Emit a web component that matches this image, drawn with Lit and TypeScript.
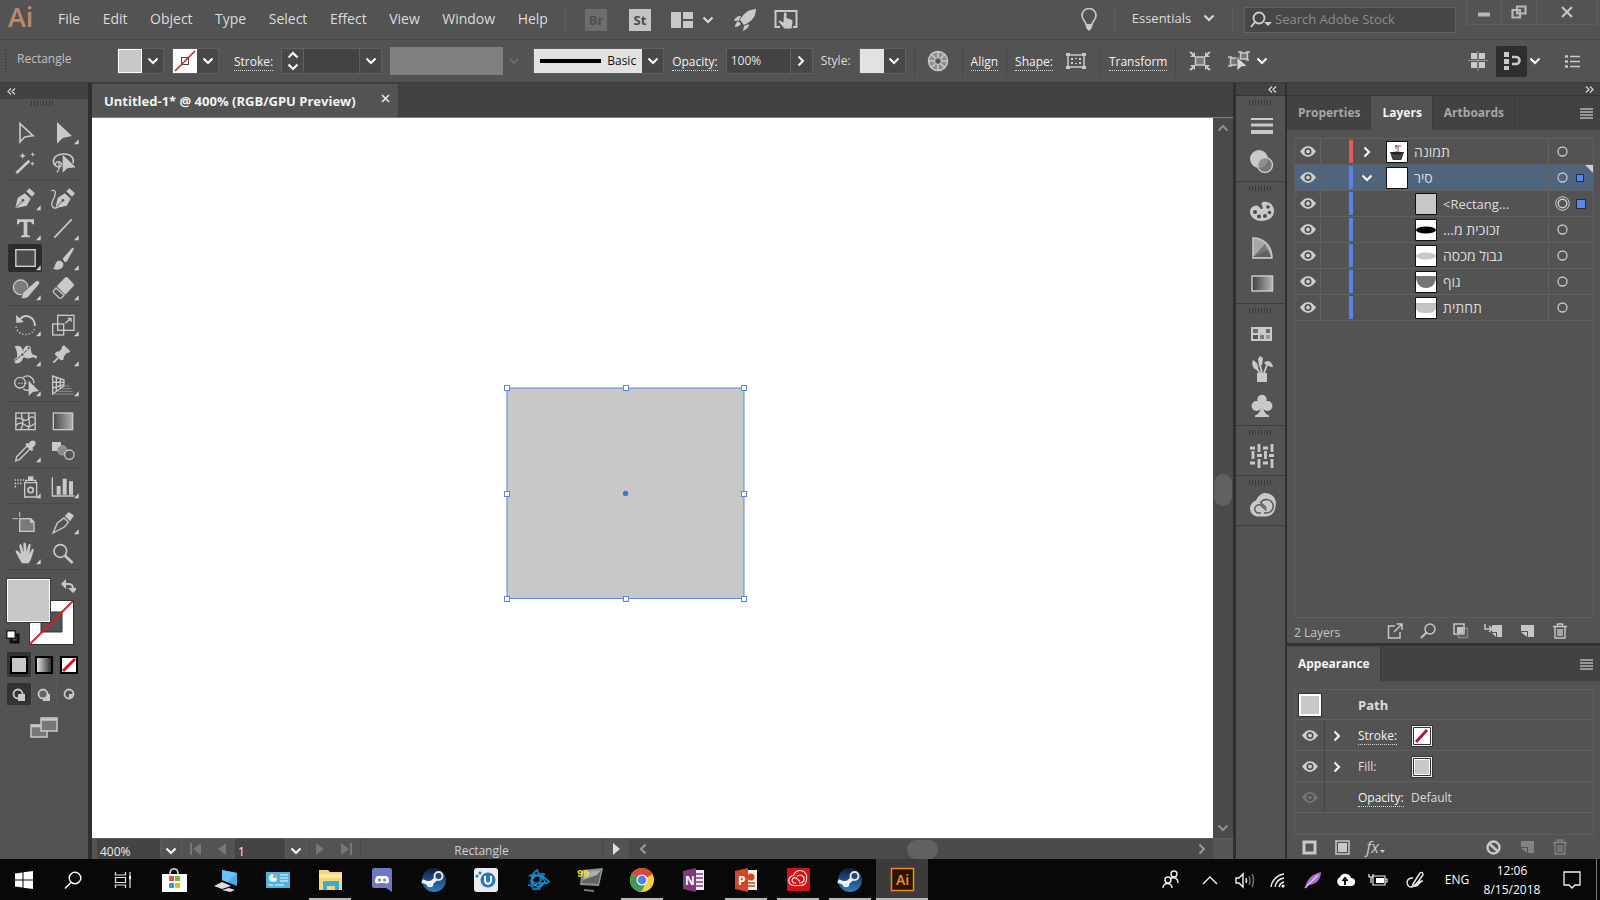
import { LitElement, html, svg, css, nothing } from "lit";
import type { SVGTemplateResult } from "lit";
import { customElement } from "lit/decorators.js";
import { classMap } from "lit/directives/class-map.js";

type Art = SVGTemplateResult;

const icon = (w: number, h: number, body: Art, vb = `0 0 ${w} ${h}`) =>
  html`<svg width=${w} height=${h} viewBox=${vb} fill="none" aria-hidden="true">${body}</svg>`;

const chevronDown = icon(12, 8, svg`<path d="M1.500 1.500L6 6l4.500-4.500" stroke="currentColor" stroke-width="2"/>`);
const chevronUp = icon(12, 8, svg`<path d="M1.500 6.500L6 2l4.500 4.500" stroke="currentColor" stroke-width="2"/>`);
const chevronRight = icon(8, 12, svg`<path d="M1.500 1.500L6 6l-4.500 4.500" stroke="currentColor" stroke-width="2"/>`);
const chevronLeft = icon(8, 12, svg`<path d="M6.500 1.500L2 6l4.500 4.500" stroke="currentColor" stroke-width="2"/>`);
const collapseLeft = icon(9, 7, svg`<path d="M4 .5L1 3.500l3 3M8 .5L5 3.500l3 3" stroke="#d0d0d0" stroke-width="1.300"/>`);
const collapseRight = icon(9, 7, svg`<path d="M1 .5l3 3-3 3M5 .5l3 3-3 3" stroke="#d0d0d0" stroke-width="1.300"/>`);
const panelMenu = icon(13, 11, svg`<path d="M0 1h13M0 4h13M0 7h13M0 10h13" stroke="#b4b4b4" stroke-width="1.400"/>`);
const eye = icon(16, 11, svg`<path d="M0 5.500C3 1.500 5.400.3 8 .3s5 1.200 8 5.200c-3 4-5.400 5.200-8 5.200S3 9.500 0 5.500z" fill="currentColor"/><circle cx="8" cy="5.500" r="3.500" fill="#4b4b4b"/><circle cx="8" cy="5.500" r="1.900" fill="currentColor"/>`);

/* Tool glyphs are drawn on a 3x grid; each box is 102 x 84 units. */
interface Tool { name: string; at: [number, number]; art: Art; fly?: boolean; active?: boolean; }
const C = "#c9c9c9";
const nib = (dx: number) => svg`<g transform="translate(${dx} 0)"><path d="M46 385l7-31 21-14 18 16-12 21z" fill=${C}/><path d="M79 334l9-9 17 15-9 10z" fill=${C}/><path d="M48 383l19-20" stroke="#535353" stroke-width="3"/><circle cx="69" cy="361" r="4" fill="#535353"/></g>`;

const toolGroups: Tool[][] = [
  [
    { name: "Selection", at: [24, 114], art: svg`<path d="M60 131v55l14-15 25-4z" stroke=${C} stroke-width="5"/>` },
    { name: "Direct Selection", at: [138, 114], fly: true, art: svg`<path d="M171 126v65l17-17 28-6z" fill=${C}/>` },
    { name: "Magic Wand", at: [24, 204], art: svg`<path d="M49 279l39-37" stroke=${C} stroke-width="8"/><path d="M68 218l3 7 7 2-7 3-3 7-3-7-7-3 7-2zM98 216l2 5 6 2-6 2-2 6-2-6-5-2 5-2zM97 244l2 5 6 2-6 2-2 5-2-5-5-2 5-2z" fill=${C}/>` },
    { name: "Lasso", at: [138, 204], art: svg`<path d="M169 258c-16-10-10-34 20-36 24-1 34 12 30 28" stroke=${C} stroke-width="5"/><path d="M180 246c-14-4-20 12-6 15 12 2 14-14 4-15-4 10 6 20-8 31" stroke=${C} stroke-width="4"/><path d="M188 224v54l14-13 25-3z" fill=${C}/>` },
  ],
  [
    { name: "Pen", at: [24, 312], fly: true, art: nib(0) },
    { name: "Curvature", at: [138, 312], art: svg`${nib(120)}<path d="M154 332c18-6 12 16 4 30-8 18 6 28 16 18" stroke=${C} stroke-width="4"/>` },
    { name: "Type", at: [24, 402], fly: true, art: svg`<path d="M51 418h51v15h-5l-4-7H82v39l8 2v5H63v-5l8-2v-39H60l-4 7h-5z" fill=${C}/>` },
    { name: "Line Segment", at: [138, 402], fly: true, art: svg`<path d="M163 473l52-55" stroke=${C} stroke-width="5"/>` },
    { name: "Rectangle", at: [24, 492], fly: true, active: true, art: svg`<rect x="47.500" y="509" width="58" height="50" stroke="#d4d4d4" stroke-width="4" fill="#4d4d4d"/>` },
    { name: "Paintbrush", at: [138, 492], fly: true, art: svg`<path d="M188 536l26-30q8-6 7 2l-20 36q-5 4-8 1z" fill=${C}/><path d="M157 565c9-1 6-11 13-20 8-7 22 0 20 11-3 14-20 16-33 9z" fill=${C}/>` },
    { name: "Shaper", at: [24, 582], fly: true, art: svg`<circle cx="62" cy="622" r="22" fill="#7c7c7c" stroke=${C} stroke-width="4"/><path d="M64 657l4-19 40-35q5-3 9 1 4 5 1 8l-35 41z" fill=${C} stroke="#535353" stroke-width="2"/>` },
    { name: "Eraser", at: [138, 582], fly: true, art: svg`<path d="M170 619l26-27q3-2 6 0l19 20q2 3 0 6l-25 26z" fill=${C}/><path d="M168 624l24 22-8 8q-3 2-6 0l-17-16q-2-3 0-6z" stroke=${C} stroke-width="4"/>` },
  ],
  [
    { name: "Rotate", at: [24, 690], fly: true, art: svg`<path d="M60 718c14-18 44-10 45 20" stroke=${C} stroke-width="6"/><path d="M48 705l1 24 23-3z" fill=${C}/><path d="M48 740c4 30 50 32 57 2" stroke=${C} stroke-width="4" stroke-dasharray="4 6"/>` },
    { name: "Scale", at: [138, 690], fly: true, art: svg`<rect x="173" y="706" width="49" height="45" stroke=${C} stroke-width="4"/><rect x="158" y="732" width="33" height="33" stroke=${C} stroke-width="4"/><path d="M196 730l12-11" stroke=${C} stroke-width="4"/><path d="M201 713h14v14z" fill=${C}/>` },
    { name: "Width", at: [24, 780], fly: true, art: svg`<path d="M44 799c16-6 26 4 24 18 4-24 22-28 26-2 2 12 10 8 18 14l-4 8c-6-10-14-4-20-2-8 2-10-4-18-2-6 14-14 20-26 16 8-14 12-26 0-50z" fill=${C}/><path d="M48 840l40-36" stroke="#535353" stroke-width="3"/><circle cx="49" cy="840" r="5" stroke=${C} stroke-width="3"/><circle cx="86" cy="804" r="5" stroke=${C} stroke-width="3" fill="#535353"/><circle cx="67" cy="824" r="5" stroke=${C} stroke-width="3" fill="#535353"/>` },
    { name: "Puppet Warp", at: [138, 780], fly: true, art: svg`<path d="M192 796l19 18-6 5-4-1-9 11-2 10-8 2-18-18 4-7 10-2 8-9-1-5z" fill=${C}/><path d="M160 848l15-15" stroke=${C} stroke-width="5"/>` },
    { name: "Shape Builder", at: [24, 870], fly: true, art: svg`<circle cx="60" cy="908" r="16" stroke=${C} stroke-width="4"/><path d="M70 892c14-10 32 0 32 18M70 926c6 6 12 6 18 4" stroke=${C} stroke-width="4"/><path d="M56 910h26" stroke=${C} stroke-width="4" stroke-dasharray="4 4"/><path d="M86 902v46l12-12 19-3z" fill=${C}/>` },
    { name: "Perspective Grid", at: [138, 870], fly: true, art: svg`<path d="M158 888v54l34-24v-18zM158 906l34 1M158 924l34-10M169 892v42M181 896v30" stroke=${C} stroke-width="4"/><path d="M192 918h16M184 926h30M174 934h44M162 942h60" stroke="#8b8b8b" stroke-width="3"/>` },
  ],
  [
    { name: "Mesh", at: [24, 18], art: svg`<rect x="47.500" y="39" width="58" height="50" stroke=${C} stroke-width="4"/><path d="M46 56c20-8 24 10 34 4s12-14 25-6M46 78c12-14 24-8 30-2s18 4 29-6M66 39c-6 16 12 26-4 50M88 39c-10 18 10 28-4 50" stroke=${C} stroke-width="4"/>` },
    { name: "Gradient", at: [138, 18], art: svg`<defs><linearGradient id="tg"><stop stop-color="#4a4a4a"/><stop offset="1" stop-color="#b0b0b0"/></linearGradient></defs><rect x="160" y="39" width="58" height="50" fill="url(#tg)" stroke=${C} stroke-width="4"/>` },
    { name: "Eyedropper", at: [24, 108], fly: true, art: svg`<path d="M47 183l3-13 31-32 9 9-31 31z" stroke=${C} stroke-width="4"/><path d="M76 133l5-5 5 4c4-12 20-14 21-3 0 8-6 12-10 14l3 6-5 5z" fill=${C}/>` },
    { name: "Blend", at: [138, 108], art: svg`<path d="M156 126h27v27h-27z" fill=${C}/><circle cx="187" cy="151" r="14" fill="#8c8c8c" stroke="#a5a5a5" stroke-width="3"/><circle cx="208" cy="164" r="14" fill="#535353" stroke=${C} stroke-width="4"/>` },
  ],
  [
    { name: "Symbol Sprayer", at: [24, 216], fly: true, art: svg`<path d="M74 248h36v43H74zM77 248v-7h30v7" stroke=${C} stroke-width="4"/><path d="M84 229h16v12H84z" fill=${C}/><circle cx="92" cy="270" r="8" stroke=${C} stroke-width="5"/><path d="M44 240h4M52 240h4M60 240h4M68 240h4M44 250h4M52 250h4M60 250h4M44 260h4" stroke=${C} stroke-width="5"/>` },
    { name: "Column Graph", at: [138, 216], fly: true, art: svg`<path d="M157 232v56h66" stroke=${C} stroke-width="4"/><path d="M170 258h12v26h-12zM188 236h12v48h-12zM207 244h12v40h-12z" fill=${C}/>` },
  ],
  [
    { name: "Artboard", at: [24, 324], art: svg`<path d="M59 356h33l10 10v28H59z" stroke=${C} stroke-width="4" fill="#7a7a7a"/><path d="M38 356h16M59 336v15" stroke=${C} stroke-width="3"/><path d="M90 354v14h14z" fill=${C}/>` },
    { name: "Slice", at: [138, 324], fly: true, art: svg`<path d="M159 399l13-30 20-15 13 13-12 14z" stroke=${C} stroke-width="4"/><path d="M194 348l10-10q3-2 6 0l12 9-12 17z" fill=${C}/>` },
    { name: "Hand", at: [24, 414], fly: true, art: svg`<path d="M62 484l-13-24c-6-8 2-11 6-6l8 8-5-24c-1-6 6-7 7-1l6 20-1-25c0-5 7-5 8 0l2 24 5-21c2-5 8-4 7 2l-4 24 7-12c3-5 8-2 6 3-4 12-6 26-15 38H66z" fill=${C}/>` },
    { name: "Zoom", at: [138, 414], art: svg`<circle cx="181" cy="453" r="19" stroke=${C} stroke-width="5"/><path d="M195 467l23 22" stroke=${C} stroke-width="8"/>` },
  ],
];

interface Layer { name: string; color: string; open?: boolean; group?: boolean; rtl?: boolean; selected?: boolean; target?: boolean; thumb: Art; }
const layers: Layer[] = [
  { name: "תמונה", color: "#e05a5a", group: true, rtl: true, thumb: svg`<path d="M4 11.500h3M15 11.500h3M5 12.500h12l-2 6H7z" stroke="#333" fill="#444"/><ellipse cx="11" cy="12" rx="6" ry="1.500" fill="#222"/><path d="M10 5h5M9 7h4M11 9h2" stroke="#a33"/><path d="M9 5h2" stroke="#222"/>` },
  { name: "סיר", color: "#5a82e6", group: true, open: true, rtl: true, selected: true, thumb: svg`` },
  { name: "<Rectang...", color: "#5a82e6", target: true, thumb: svg`<rect width="20" height="20" x="1" y="1" fill="#c8c8c8"/>` },
  { name: "זכוכית מ...", color: "#5a82e6", rtl: true, thumb: svg`<ellipse cx="11" cy="11" rx="10" ry="3.500" fill="#000"/>` },
  { name: "גבול מכסה", color: "#5a82e6", rtl: true, thumb: svg`<ellipse cx="11" cy="11" rx="10" ry="3.500" fill="#c8c8c8"/>` },
  { name: "גוף", color: "#5a82e6", rtl: true, thumb: svg`<path d="M1 5h20c0 8-4 12-10 12S1 13 1 5z" fill="#757575"/>` },
  { name: "תחתית", color: "#5a82e6", rtl: true, thumb: svg`<path d="M1 6h20v5c-1 4-4 5-10 5S2 15 1 11z" fill="#c4c4c4"/>` },
];

const dockGroups: [string, Art][][] = [
  [
    ["Stroke", svg`<path d="M3 7h22" stroke=${C} stroke-width="2"/><path d="M3 13h22" stroke=${C} stroke-width="3"/><path d="M3 20h22" stroke=${C} stroke-width="4"/>`],
    ["Transparency", svg`<circle cx="11" cy="11" r="9" fill=${C}/><circle cx="17" cy="17" r="7.500" fill="#7f7f7f" fill-opacity=".8" stroke=${C} stroke-width="1.500"/>`],
  ],
  [
    ["Color", svg`<path d="M2 13.500C2 9 7 7 9 7.500c3 1 3 4 5 3.500 2 0 0-3-.5-4.500C13 4 16 3.500 19 4c5 1 7 5 7 9 0 6-5 10-12 10-8 0-12-5-12-9.500z" fill=${C}/><g fill="#4c4c4c"><circle cx="7" cy="14" r="2"/><circle cx="11" cy="18.500" r="2"/><circle cx="17" cy="18" r="2"/><circle cx="21.500" cy="14.500" r="1.800"/><circle cx="20" cy="9" r="1.800"/></g>`],
    ["Color Guide", svg`<path d="M5 4c11 0 19 8 19 20H5z" fill="#a8a8a8" stroke=${C} stroke-width="1.500"/><path d="M5 23L17 10l6 13z" fill="#777"/><path d="M5 23l15-7 3 7z" fill="#5f5f5f"/>`],
    ["Gradient", svg`<defs><linearGradient id="dg"><stop stop-color="#3f3f3f"/><stop offset="1" stop-color="#b4b4b4"/></linearGradient></defs><rect x="4" y="6" width="20.500" height="15" fill="url(#dg)" stroke=${C} stroke-width="1.500"/>`],
  ],
  [
    ["Swatches", svg`<path d="M3 7h21v14H3z" fill=${C}/><path d="M5 9h5v4H5zM18 9h4v4h-4z" fill="#6c6c6c"/><path d="M5 15h5v4H5z" fill="#555"/><path d="M12 15h4v4h-4z" fill="#7a7a7a"/><path d="M18 15h4v4h-4z" fill="#999"/>`],
    ["Brushes", svg`<path d="M9 17h10v9H9z" fill=${C}/><path d="M12 17l-5-7M14 17l-2-8M16 17l3-8" stroke=${C} stroke-width="1.800"/><path d="M5 4c4 2 6 6 5 10-5 0-7-6-5-10zM10 3l2-3 3 2-1 7-3 1zM16 7c3-4 8-2 9 4-2 0-6-1-9-4z" fill=${C}/>`],
    ["Symbols", svg`<g fill=${C}><circle cx="14" cy="7.500" r="4.700"/><circle cx="8.500" cy="14" r="4.900"/><circle cx="19.500" cy="14" r="4.900"/><path d="M13 11h2c0 8 2 11 6 12.500V25H7v-1.500c4-1.500 6-4.500 6-12.500z"/></g>`],
  ],
  [["Image Trace", svg`<path d="M2 6h5M15 6h5M2 21h5M15 21h5M9 13.500h5M21 13.500h5" stroke=${C} stroke-width="2.800"/><path d="M11 2v8M24 2v8M5 9v8M17.500 9v8M11 17v9M24 17v9" stroke=${C} stroke-width="2.800"/>`]],
  [["Libraries", svg`<path d="M9 24.500a8.200 8.200 0 0 1-1-16A10 10 0 0 1 27.500 14c0 6-4 10.500-9.500 10.500z" fill=${C}/><path d="M16 21h2.500a6.800 6.800 0 1 0-5.800-10.500M18.500 18.500l-6-5.500A4.200 4.200 0 1 0 9.500 21H13M12 10l6.500 6" stroke="#5b5b5b" stroke-width="1.500"/>`]],
];

const steam = svg`<defs><linearGradient id="st" x2="0" y2="1"><stop stop-color="#101c3a"/><stop offset="1" stop-color="#2f7fc0"/></linearGradient></defs><circle cx="14" cy="14" r="12" fill="url(#st)"/><path d="M2 15l8 3 7-6" stroke="#e6eef5" stroke-width="4"/><circle cx="18.500" cy="10" r="4" stroke="#dfe7ee" stroke-width="2" fill="#25466e"/><circle cx="10" cy="18" r="2.500" stroke="#fff" stroke-width="1.500"/>`;
interface App { name: string; art: Art; open?: boolean; active?: boolean; }
const apps: App[] = [
  { name: "Store", art: svg`<path d="M2 8h25v18H2z" fill="#fff"/><path d="M10 8c0-7 8-7 8 0" stroke="#ddd" stroke-width="1.600"/><path d="M9 10h5v5H9z" fill="#e8552e"/><path d="M15 10h5v5h-5z" fill="#7db32e"/><path d="M9 17h5v5H9z" fill="#2e9de0"/><path d="M15 17h5v5h-5z" fill="#f4b321"/>` },
  { name: "This PC", art: svg`<path d="M10 4l15 3v13l-15-6z" fill="#45aef0"/><path d="M10 4l15 3-9 9-6-2z" fill="#68c2f8"/><path d="M2 20l8-4 9 4-9 3zM10 24l7-2 6 2-5 2z" fill="#d8dde0"/>` },
  { name: "Control Panel", art: svg`<rect x="2" y="6" width="24" height="16" fill="#4fb3e8"/><circle cx="9" cy="12" r="4" fill="#e8f4fb"/><path d="M9 12V8a4 4 0 0 1 4 4z" fill="#e5a23b"/><path d="M16 9h8M16 12h8M16 15h8M4 19h5M11 19h9" stroke="#bfe4f7" stroke-width="1.500"/>` },
  { name: "File Explorer", open: true, art: svg`<path d="M3 4h9l2 2h12v18H3z" fill="#f4d77c"/><path d="M3 8h23v4H3z" fill="#fbe7a2"/><path d="M7 24v-9h16v9h-4v-4h-8v4z" fill="#3fa9d6"/>` },
  { name: "Discord", art: svg`<path d="M4 4q0-2 2-2h16q2 0 2 2v22l-6-4H6q-2 0-2-2z" fill="#7078c0"/><path d="M7 16c0-4 1-6 3-6h8c2 0 3 2 3 6-2 3-4 1-4 1h-6s-2 2-4-1z" fill="#fff"/><circle cx="11.500" cy="14" r="1.500" fill="#7078c0"/><circle cx="16.500" cy="14" r="1.500" fill="#7078c0"/>` },
  { name: "Steam", art: steam },
  { name: "uTorrent", art: svg`<rect x="2" y="2" width="24" height="24" rx="3" fill="#e9edf1"/><circle cx="16" cy="14" r="7.500" fill="#2c76bd"/><path d="M13 10v4c0 5 6 5 6 0v-4" stroke="#fff" stroke-width="2"/><circle cx="5" cy="10" r="1.500" fill="#2c76bd"/><circle cx="8" cy="7" r="1.500" fill="#2c76bd"/>` },
  { name: "Battle.net", art: svg`<path d="M5 10c6-3 14-1 20 6-6 3-14 2-19-2M9 23C6 14 8 7 13 4c4 6 5 14 2 20M4 19c6 2 13-1 16-11-5-1-10 2-13 7M9 23c3 1 8-1 12-7" stroke="#1676b0" stroke-width="2"/><path d="M9 10h9l3 6-7 5-6-4z" stroke="#1c9be4" stroke-width="1.200"/>` },
  { name: "Afterburner", art: svg`<path d="M6 4l21-2-4 18-19-1z" fill="#8d9296"/><path d="M8 6l17-2-3 14-16-1z" fill="#5d6367"/><path d="M8 6l17-2-4 5-14 5z" fill="#a9aeb1"/><path d="M8 24l10 1" stroke="#777" stroke-width="2"/><text x="1" y="11" font-family="Liberation Mono" font-weight="700" font-size="10" fill="#f2ea14">99</text>` },
  { name: "Chrome", open: true, art: svg`<circle cx="14" cy="14" r="12" fill="#f7cf3a"/><path d="M14 14L3.600 8A12 12 0 0 1 24.400 8z" fill="#d9483b"/><path d="M14 14L3.600 8A12 12 0 0 0 13 26l5-9z" fill="#3e9b53"/><path d="M14 8h10.400L14 14z" fill="#d9483b"/><circle cx="14" cy="14" r="5.500" fill="#fff"/><circle cx="14" cy="14" r="4.400" fill="#4a84e8"/>` },
  { name: "OneNote", art: svg`<path d="M13 4h11v20H13z" fill="#f2edf5"/><path d="M15 8h8M15 12h8M15 16h8M15 20h8" stroke="#80397b" stroke-width="1.500"/><path d="M3 5l13-3v24L3 23z" fill="#80397b"/><text x="5" y="19" font-family="Open Sans" font-weight="700" font-size="12" fill="#fff">N</text>` },
  { name: "PowerPoint", open: true, art: svg`<path d="M13 4h12v20H13z" fill="#f7ece8"/><circle cx="19" cy="11" r="3.500" fill="#d24726"/><path d="M15 17h8M15 20h8" stroke="#d24726" stroke-width="1.500"/><path d="M3 5l13-3v24L3 23z" fill="#d24726"/><text x="6" y="19" font-family="Open Sans" font-weight="700" font-size="12" fill="#fff">P</text>` },
  { name: "Creative Cloud", open: true, art: svg`<rect x="3" y="2" width="23" height="23" fill="#d0121b"/><path d="M10 19.500a5 5 0 0 1-.5-10A6.300 6.300 0 0 1 22.500 13c0 4-2.500 6.500-6 6.500zM15 17h1.500a4 4 0 1 0-3.500-6.500M16 15.500l-4-3.500a2.700 2.700 0 1 0-2 5h2" stroke="#ffe0e0" stroke-width="1.200"/>` },
  { name: "Steam Client", open: true, art: steam },
  { name: "Illustrator", open: true, active: true, art: svg`<rect x="3.500" y="2.500" width="22" height="22" fill="#2a1400" stroke="#e98a1a" stroke-width="1.500"/><text x="8" y="19" font-family="Open Sans" font-weight="600" font-size="14" fill="#f0921e">Ai</text>` },
];

const tray: [string, number, Art][] = [
  ["People", 42, svg`<circle cx="15" cy="5" r="3"/><circle cx="9" cy="11" r="3"/><path d="M4 19c0-6 9-6 9 0M12 9c5-1 7 1 7 5"/>`],
  ["Hidden icons", 38, svg`<path d="M4 15l7-7 7 7"/>`],
  ["Volume", 30, svg`<path d="M3 9h3l4-4v13l-4-4H3zM13 9q1 2.500 0 5"/><path d="M16 7q2 4.500 0 9M19 5q3 6 0 13" stroke="#777"/>`],
  ["Network", 38, svg`<path d="M4 18A15 15 0 0 1 17 5M8 18a11 11 0 0 1 9-9M12 18a7 7 0 0 1 5-5"/><circle cx="16" cy="17" r="1.500" fill="#fff" stroke="none"/>`],
  ["Pen service", 32, svg`<path d="M3 19C5 9 11 5 19 3c0 8-6 13-12 13z" fill="#a86fd0" stroke="none"/><path d="M3 19L16 6" stroke="#e4c8f5"/>`],
  ["Cloud sync", 32, svg`<path d="M6 17a5 5 0 0 1 0-9 6 6 0 0 1 11 1 4 4 0 0 1 0 8z" fill="#fff" stroke="none"/><path d="M11 16v-5M8.500 12l2.500-3 2.500 3" stroke="#000" stroke-width="1.800"/>`],
  ["Battery", 34, svg`<path d="M6 7h12v9H6zM18 10h2v3h-2" stroke-width="1.100"/><path d="M9 9h8v5H9z" fill="#fff" stroke="none"/><path d="M2 5v3h4V5M4 8v6" stroke-width="1.200"/>`],
  ["Ink Workspace", 42, svg`<path d="M8 15l7-11q3-2 3 2l-8 11-3 1zM8 9c-8 0-7 8-2 9 5 0 4-6 12-6M9 16c3 3 4-2 7-3"/>`],
];

@customElement("app-root")
export class AppRoot extends LitElement {
  static styles = css`
    :host { display: block; font: 12px/16px "Open Sans", "Noto Sans", sans-serif; color: #dcdcdc; }
    * { box-sizing: border-box; }
    svg { display: block; flex: none; }
    button, input { font: inherit; color: inherit; border: 0; border-radius: 0; margin: 0; padding: 0; background: none; min-width: 0; }
    button { display: flex; align-items: center; justify-content: center; flex: none; white-space: nowrap; }
    .app { display: grid; grid-template-rows: 40px 43px minmax(0, 1fr) 41px; height: 100vh; background: #535353; overflow: hidden; }
    .grow { flex: 1; }
    .rule { width: 1px; height: 32px; background: #484848; flex: none; }

    .menubar { display: flex; align-items: center; border-bottom: 1px solid #474747; }
    .logo { width: 49px; padding-left: 8px; font-size: 27px; line-height: 34px; font-weight: 600; color: #b98a6c; height: 40px; }
    .menus { display: flex; width: 508px; justify-content: space-between; padding-left: 9px; padding-right: 9px; font-size: 14px; line-height: 20px; }
    .menus button { height: 38px; padding-bottom: 2px; }
    .menubar .rule { height: 26px; background: #5e5e5e; }
    .quick { display: flex; align-items: center; gap: 18px; padding-left: 19px; margin-left: 8px; }
    .menus + .rule { margin-left: 8px; }
    .rule + .quick { margin-left: 0; }
    .badge { width: 22px; height: 22px; background: #c4c4c4; color: #4a4a4a; font-weight: 700; font-size: 13px; }
    .badge.off { background: #6d6d6d; color: #505050; margin-right: 4px; }
    .pair { display: flex; align-items: center; gap: 9px; padding: 0 2px; }
    .bulb { width: 50px; }
    .workspace { width: 117px; gap: 12px; font-size: 13px; height: 32px; padding-bottom: 4px; }
    .search { display: flex; align-items: center; gap: 3px; width: 212px; height: 26px; margin-left: 11px; padding-left: 5px; border: 1px solid #626262; background: #464646; }
    .search input { flex: 1; font-size: 13px; line-height: 18px; outline: 0; height: 24px; padding-bottom: 2px; }
    .search input::placeholder { color: #8c8c8c; opacity: 1; }
    .window { display: flex; align-self: flex-start; height: 25px; margin: 0 2px 0 10px; border: 1px solid #5e5e5e; border-top: 0; border-radius: 0 0 3px 3px; }
    .window button { width: 35px; border-right: 1px solid #5e5e5e; }
    .window button:last-child { width: 60px; border-right: 0; }

    .control { display: flex; align-items: center; gap: 8px; padding-left: 5px; border-bottom: 1px solid #3a3a3a; }
    .vgrip { width: 2px; height: 22px; background: repeating-linear-gradient(#3c3c3c 0 1px, transparent 1px 3px); }
    .context { width: 94px; padding: 0 0 4px 2px; color: #c0c0c0; }
    .link { height: 18px; border-bottom: 1px dotted #d8d8d8; color: #f2f2f2; line-height: 17px; text-decoration: none; white-space: nowrap; }
    .control .link { margin-top: 1px; }
    .gap-l { margin-left: 7px; }
    .combo { display: flex; height: 26px; border: 1px solid #606060; background: #484848; }
    .combo > button { width: 21px; color: #fff; }
    .combo .swatch { width: 24px; border: 1px solid #fff; background: #c8c8c8; }
    .combo .swatch.none { background: #fff; }
    .combo .swatch.light { background: #e2e2e2; border-color: #e2e2e2; }
    .combo input { width: 56px; background: #434343; padding-left: 4px; font-size: 12px; border-right: 1px solid #606060; }
    .combo input.pct { width: 64px; color: #e6e6e6; }
    .steps { display: flex; flex-direction: column; width: 22px; border-right: 1px solid #606060; }
    .steps button { height: 12px; color: #fff; }
    .profile { display: flex; height: 28px; }
    .profile .bar { width: 113px; background: #808080; }
    .profile .drop { width: 22px; color: #6d6d6d; }
    .combo .brush { width: 108px; background: #e2e2e2; color: #111; gap: 6px; }
    .iconbtn { width: 31px; height: 31px; }
    .iconbtn.on { background: #2e2e2e; border-radius: 2px; }
    .iconbtn.wide { width: 49px; padding-right: 6px; }
    .tight { display: flex; align-items: center; }
    .tight .chev { width: 16px; height: 24px; color: #fff; }

    .work { display: grid; grid-template-columns: 88px 4px minmax(0, 1fr) 3px 49px 315px; min-height: 0; background: #2f2f2f; }
    .tools { background: #535353; display: flex; flex-direction: column; min-height: 0; }
    .strip { display: flex; align-items: center; background: #424242; flex: none; }
    .tools .strip { height: 16px; padding-left: 7px; }
    .grip { width: 24px; height: 5px; background: repeating-linear-gradient(90deg, #3a3a3a 0 1px, transparent 1px 3px); }
    .tools .grip { margin: 2px auto 12px 31px; }
    .toolset { display: grid; grid-template-columns: 34px 34px; gap: 2px 4px; margin: 0 5px; padding: 0 3px 3px; border-bottom: 1px solid #494949; margin-bottom: 4px; }
    .tool { width: 34px; height: 28px; }
    .tool.on { background: #2c2c2c; border-radius: 2px; }
    .paint { margin: 4px 0 0 6px; }
    .modes { display: grid; grid-template-columns: repeat(3, 24px); gap: 1px; margin: 6px 0 0 7px; background: #5a5a5a; width: 74px; }
    .modes button { height: 25px; background: #535353; }
    .modes .on { background: #333; }
    .modes.draw button { height: 22px; }
    .screen { margin: 12px 0 0 30px; width: 28px; }

    .doc { display: grid; grid-template-rows: 34px 1px minmax(0, 1fr) 21px; min-width: 0; min-height: 0; background: #808080; }
    .tabs { display: flex; background: #424242; padding-top: 1px; }
    .doctab { display: flex; align-items: center; justify-content: space-between; width: 307px; padding: 0 7px 0 12px; background: #535353; border-right: 1px solid #3a3a3a; font-weight: 700; color: #f2f2f2; font-size: 13px; white-space: nowrap; }
    .doctab button { width: 12px; height: 16px; padding-bottom: 4px; }
    .stage { grid-row: 3; display: flex; min-height: 0; }
    .canvas { flex: 1; background: #fff; position: relative; overflow: hidden; }
    .shape { position: absolute; left: 411px; top: 266px; }
    .vscroll { width: 20px; background: #4a4a4a; display: flex; flex-direction: column; align-items: center; color: #8f8f8f; }
    .vscroll button, .hscroll button { width: 20px; height: 20px; }
    .vscroll .thumb { width: 18px; height: 32px; border-radius: 9px; background: #616161; }
    .vscroll .before { flex: 14; }
    .vscroll .after { flex: 13; }
    .status { grid-row: 4; display: flex; min-width: 0; background: #535353; padding-left: 5px; border-top: 1px solid #5f5f5f; }
    .status input { background: #444; padding-left: 3px; font-size: 12px; height: 20px; padding-top: 4px; color: #ededed; }
    .status .zoom { width: 63px; }
    .status .page { width: 50px; }
    .status .drop { width: 22px; color: #fff; padding-top: 3px; border: 1px solid #5c5c5c; border-width: 0 1px; }
    .nav { display: flex; justify-content: space-around; width: 53px; color: #777; }
    .nav button { width: 20px; }
    .mode { width: 243px; text-align: center; border: 1px solid #484848; border-width: 0 1px; line-height: 24px; color: #cfcfcf; }
    .play { width: 26px; }
    .hscroll { flex: 1; display: flex; background: #4a4a4a; align-items: center; padding: 0 1px 0 4px; color: #9a9a9a; }
    .hscroll .track { flex: 1; display: flex; justify-content: center; }
    .hscroll .thumb { width: 31px; height: 19px; border-radius: 9px; background: #616161; }
    .corner { width: 20px; background: #565656; }

    .dock { background: #535353; display: flex; flex-direction: column; }
    .dock .strip { height: 13px; justify-content: flex-end; padding-right: 8px; border-bottom: 1px solid #333; }
    .dockset { padding-bottom: 1px; border-bottom: 1px solid #3e3e3e; }
    .dockset .grip { margin: 4px 0 3px 13px; }
    .dockset button { width: 49px; height: 36px; padding-left: 2px; }

    .panels { display: flex; flex-direction: column; min-height: 0; border-left: 2px solid #2f2f2f; background: #535353; }
    .panels > .strip { height: 13px; justify-content: flex-end; padding-right: 6px; border-bottom: 1px solid #333; }
    .ptabs { display: flex; align-items: stretch; height: 34px; background: #424242; flex: none; font-size: 12px; font-weight: 700; color: #a6a6a6; }
    .ptabs button { padding: 0 10px 0 11px; border-right: 1px solid #3b3b3b; }
    .ptabs .on { background: #535353; color: #f4f4f4; }
    .ptabs .more { margin-left: auto; padding: 0 7px 0; border: 0; }
    .list { flex: 1; min-height: 0; margin: 8px 6px 0 7px; border: 1px solid #5d5d5d; border-top-color: #606060; }
    .layer { display: grid; grid-template-columns: 26px 28px 4px 27px minmax(0, 1fr) 45px; height: 26px; border-bottom: 1px solid #616161; align-items: stretch; }
    .layer.sel { background: #4f657e; }
    .layer > * { display: flex; align-items: center; }
    .layer .vis { border-right: 1px solid #616161; color: #cfcfcf; }
    .layer .tint { margin: 1px 0; }
    .layer .name { gap: 6px; padding-left: 6px; font-size: 13px; min-width: 0; }
    .layer .name.child { padding-left: 35px; }
    .layer .fold { color: #fff; justify-content: center; width: 27px; }
    .label { white-space: nowrap; }
    .label[dir="rtl"] { font-size: 14px; }
    .layer .end { border-left: 1px solid #616161; gap: 6px; padding-left: 6px; }
    .layer.sel .end { background: linear-gradient(225deg, #d0d0d0 5px, transparent 6px); }
    .pfoot { display: flex; align-items: center; height: 24px; margin: 1px 24px 0 7px; color: #c6c6c6; flex: none; }
    .pfoot button { width: 33px; height: 22px; }
    .pfoot .count { flex: 1; font-size: 12px; padding-top: 3px; }
    .split { height: 4px; background: #333; border-bottom: 1px solid #484848; flex: none; }
    .attrs { flex: none; height: 146px; margin: 8px 6px 0 7px; border: 1px solid #5d5d5d; font-size: 12px; }
    .attr { display: grid; grid-template-columns: 30px 33px 53px minmax(0, 1fr); height: 31px; align-items: center; border-bottom: 1px solid #616161; }
    .attr .vis { height: 31px; border-right: 1px solid #454545; color: #cfcfcf; }
    .attr .vis.off { color: #757575; }
    .attr .fold { color: #fff; padding-right: 9px; height: 24px; }
    .attr .link { justify-self: start; }
    .attr.head { grid-template-columns: 60px minmax(0, 1fr); height: 30px; padding-left: 3px; font-size: 13px; font-weight: 700; }
    .afoot { display: flex; align-items: center; margin: 0 24px 0 6px; flex: none; height: 24px; color: #c8c8c8; }
    .afoot button { width: 33px; height: 24px; }
    .afoot .fx { font-size: 16px; line-height: 24px; font-style: italic; gap: 1px; }
    .afoot .dim { opacity: .4; }

    .taskbar { display: flex; background: #080808; color: #fff; overflow: hidden; }
    .taskbar button { height: 41px; }
    .start { width: 48px; }
    .sys { width: 50px; }
    .task { width: 52px; position: relative; }
    .task.open::after { content: ""; position: absolute; left: 5px; right: 5px; bottom: 0; height: 2px; background: #b9b9b9; }
    .task.active { background: #3b3b3b; }
    .task.active::after { left: 0; right: 0; }
    .lang { width: 40px; font-size: 12px; }
    .clock { width: 70px; flex-direction: column; font-size: 12px; line-height: 19px; }
    .notes { width: 49px; }
    .desk { width: 4px; border-left: 1px solid #777; }
  `;

  private tool(t: Tool) {
    const [x, y] = t.at;
    return html`<button class=${classMap({ tool: true, on: !!t.active })} aria-label=${t.name}>
      ${icon(34, 28, svg`${t.art}${t.fly ? svg`<path d="M${x + 98} ${y + 64}v15h-14z" fill="#d0d0d0"/>` : nothing}`, `${x} ${y} 102 84`)}
    </button>`;
  }

  private menubar() {
    return html`<header class="menubar">
      <div class="logo">Ai</div>
      <nav class="menus">${["File", "Edit", "Object", "Type", "Select", "Effect", "View", "Window", "Help"].map((m) => html`<button>${m}</button>`)}</nav>
      <span class="rule"></span>
      <div class="quick">
        <button class="badge off" aria-label="Bridge">Br</button>
        <button class="badge" aria-label="Stock">St</button>
        <button class="pair" aria-label="Arrange documents">
          ${icon(22, 16, svg`<path d="M0 0h10v16H0zM12 0h10v7H12zM12 9h10v7H12z" fill=${C}/>`)}${chevronDown}
        </button>
        <button aria-label="GPU performance">${icon(22, 24, svg`<path d="M22 1C13 2 9 6 6 12l4 5C17 14 22 9 22 1zM7 8C3 8 1 10 0 13l5-.5zM15 16l-5 2-1 5c4-2 6-4 6-7zM4 13c-2 2-3 4-3 6 3 0 4-1 6-3z" fill=${C}/>`)}</button>
        <button aria-label="Touch workspace">${icon(24, 21, svg`<path d="M6 18H1.500V2h21v16H19" stroke=${C} stroke-width="2"/><path d="M10 4q1.500-1 2.500 0v5l1.500.5 1.500.5 1.500.5q2 .5 1.500 3l-1 6h-7l-6-7 1-1 4 2z" fill=${C}/>`)}</button>
      </div>
      <span class="grow"></span>
      <button class="bulb" aria-label="Learn">${icon(16, 24, svg`<path d="M5 17c0-4-4-5-4-9.500a7 7 0 0 1 14 0C15 12 11 13 11 17z" stroke=${C} stroke-width="1.600"/><path d="M5 16h6v4l-3 3-3-3z" fill=${C}/>`)}</button>
      <span class="rule"></span>
      <button class="workspace">Essentials ${chevronDown}</button>
      <span class="rule"></span>
      <label class="search">${icon(22, 18, svg`<circle cx="9" cy="7" r="5.500" stroke="#cfcfcf" stroke-width="1.800"/><path d="M5 11l-4 5" stroke="#cfcfcf" stroke-width="2"/><path d="M14 11h8l-4 4z" fill="#cfcfcf"/>`)}
        <input type="search" aria-label="Search Adobe Stock" placeholder="Search Adobe Stock" /></label>
      <div class="window">
        <button aria-label="Minimize">${icon(14, 14, svg`<path d="M1 9.500h12" stroke="#b8b8b8" stroke-width="4"/>`)}</button>
        <button aria-label="Restore">${icon(16, 14, svg`<path d="M6 1.500h8.500v7H6zM1.500 5H9v7.500H1.500z" stroke="#b8b8b8" stroke-width="2.200"/>`)}</button>
        <button aria-label="Close">${icon(14, 12, svg`<path d="M2 1l10 10M12 1L2 11" stroke="#c4c4c4" stroke-width="2.200"/>`)}</button>
      </div>
    </header>`;
  }

  private control() {
    return html`<section class="control" aria-label="Control">
      <span class="vgrip"></span><span class="context">Rectangle</span>
      <div class="combo"><button class="swatch" aria-label="Fill"></button><button aria-label="Fill options">${chevronDown}</button></div>
      <div class="combo"><button class="swatch none" aria-label="Stroke color">${icon(22, 22, svg`<rect x="7.500" y="7.500" width="7" height="7" stroke="#444"/><path d="M1 21L21 1" stroke="#c8202a" stroke-width="1.600"/>`)}</button><button aria-label="Stroke options">${chevronDown}</button></div>
      <a class="link gap-l" href="#stroke">Stroke:</a>
      <div class="combo"><span class="steps"><button aria-label="Increase">${chevronUp}</button><button aria-label="Decrease">${chevronDown}</button></span>
        <input aria-label="Stroke weight" /><button aria-label="Stroke weights">${chevronDown}</button></div>
      <div class="profile"><button class="bar" aria-label="Width profile"></button><button class="drop" aria-label="Profiles" disabled>${chevronDown}</button></div>
      <div class="combo"><button class="brush">${icon(61, 4, svg`<path d="M0 0h61v4H0z" fill="#000"/>`)}<span>Basic</span></button><button aria-label="Brushes">${chevronDown}</button></div>
      <a class="link" href="#opacity">Opacity:</a>
      <div class="combo"><input class="pct" aria-label="Opacity" .value=${"100%"} /><button aria-label="Opacity slider">${chevronRight}</button></div>
      <span class="label">Style:</span>
      <div class="combo"><button class="swatch light" aria-label="Style"></button><button aria-label="Styles">${chevronDown}</button></div>
      <span class="rule"></span>
      <button class="iconbtn" aria-label="Recolor artwork">${icon(22, 22, svg`<circle cx="11" cy="11" r="9.500" fill="#8e8e8e" stroke=${C} stroke-width="1.500"/><path d="M11 1v20M1 11h20M4 4l14 14M18 4L4 18" stroke=${C} stroke-width="1.500"/><circle cx="11" cy="11" r="3.500" fill="#6a6a6a" stroke=${C}/><circle cx="11" cy="11" r="1.500" fill="#444"/>`)}</button>
      <span class="rule"></span>
      <a class="link" href="#align">Align</a>
      <span class="rule"></span>
      <a class="link" href="#shape">Shape:</a>
      <button class="iconbtn" aria-label="Shape options">${icon(22, 18, svg`<rect x="3" y="3" width="16" height="12" stroke=${C} stroke-width="1.500"/><path d="M1 1h4v3H1zM17 1h4v3h-4zM1 14h4v3H1zM17 14h4v3h-4zM6 6h2v2H6zM10 6h2v1h-2zM14 6h2v2h-2zM6 10h2v2H6zM10 11h2v1h-2zM14 10h2v2h-2z" fill=${C}/>`)}</button>
      <span class="rule"></span>
      <a class="link" href="#transform">Transform</a>
      <span class="rule"></span>
      <button class="iconbtn" aria-label="Isolate">${icon(22, 20, svg`<rect x="6.500" y="6" width="9" height="8" fill="#7b7b7b" stroke=${C} stroke-width="1.500"/><path d="M1 1l4 3M21 1l-4 3M1 19l4-3M21 19l-4-3" stroke=${C} stroke-width="2"/><path d="M1 6h5V1zM21 6h-5V1zM1 14h5v5zM21 14h-5v5z" fill=${C}/>`)}</button>
      <div class="tight"><button class="iconbtn" aria-label="Select similar">${icon(22, 22, svg`<rect x="2.500" y="8" width="8" height="7" fill="#777" stroke=${C} stroke-width="1.500"/><rect x="12.500" y="3" width="7" height="6" fill="#777" stroke=${C} stroke-width="1.500"/><path d="M0 7h4M0 16h4M10 2h4M18 2h4M18 10h3" stroke=${C} stroke-width="1.500"/><path d="M9 7v14l4-4 6-1z" fill="#d6d6d6" stroke="#535353" stroke-width=".8"/>`)}</button><button class="chev" aria-label="More selection">${chevronDown}</button></div>
      <span class="grow"></span>
      <button aria-label="Align to grid">${icon(20, 20, svg`<path d="M3 2h6v6H3zM11 2h6v6h-6zM3 11h6v6H3zM11 11h6v6h-6z" fill=${C}/><path d="M10 0v20M0 9.500h20" stroke="#9a9a9a"/>`)}</button>
      <div class="tight"><button class="iconbtn on" aria-label="Snap">${icon(20, 20, svg`<path d="M2 1h5v5H2zM2 8h5v5H2zM2 15h5v4H2z" fill=${C}/><path d="M10 6h4a3.500 3.500 0 0 1 0 7h-4" stroke=${C} stroke-width="2.600"/>`)}</button><button class="chev" aria-label="Snap options">${chevronDown}</button></div>
      <button class="iconbtn wide" aria-label="Control menu">${icon(15, 13, svg`<path d="M0 1.500h3M0 6.500h3M0 11.500h3" stroke=${C} stroke-width="2.400"/><path d="M5 1.500h10M5 6.500h10M5 11.500h10" stroke=${C} stroke-width="1.700"/>`)}</button>
    </section>`;
  }

  private tools() {
    return html`<aside class="tools">
      <div class="strip">${collapseLeft}</div>
      <div class="grip"></div>
      ${toolGroups.map((g) => html`<div class="toolset">${g.map((t) => this.tool(t))}</div>`)}
      <div class="paint">${icon(70, 68, svg`
        <path d="M23 22h45v45H23z" fill="#333"/><path d="M24 23h43v43H24z" fill="#fff"/><path d="M35 34h21v20H35z" fill="#535353" stroke="#333"/><path d="M24 66L67 23" stroke="#c8252b" stroke-width="1.800"/>
        <path d="M0 0h45v45H0z" fill="#3a3a3a"/><path d="M1 1h43v43H1z" fill="#fff"/><path d="M2 2h41v41H2z" fill="#c8c8c8"/>
        <path d="M58 6h5q4 0 4 5v1" stroke=${C} stroke-width="2"/><path d="M60 1v10l-5-5zM62 10h10l-5 5z" fill=${C}/>
        <path d="M6 57h6v7H5v-3" stroke="#111" stroke-width="3"/><path d="M0 52h10v9H0z" fill="#222"/><path d="M1.500 53.500h7v6h-7z" fill="#fff"/>`)}</div>
      <div class="modes">
        <button class="on" aria-label="Color">${icon(18, 18, svg`<path d="M1 1h16v16H1z" fill="#c8c8c8" stroke="#000" stroke-width="2"/>`)}</button>
        <button aria-label="Gradient">${icon(18, 18, svg`<defs><linearGradient id="mg"><stop stop-color="#eee"/><stop offset="1" stop-color="#222"/></linearGradient></defs><path d="M1 1h16v16H1z" fill="url(#mg)" stroke="#000" stroke-width="2"/>`)}</button>
        <button aria-label="None">${icon(18, 18, svg`<path d="M1 1h16v16H1z" fill="#fff" stroke="#000" stroke-width="2"/><path d="M3 15L15 3" stroke="#e01020" stroke-width="3"/>`)}</button>
      </div>
      <div class="modes draw">
        <button class="on" aria-label="Draw normal">${icon(14, 13, svg`<circle cx="6" cy="6" r="4.500" stroke=${C} stroke-width="1.800"/><path d="M6 6h7v7H6z" fill=${C}/>`)}</button>
        <button aria-label="Draw behind">${icon(14, 13, svg`<path d="M6 6h7v7H6z" fill=${C}/><circle cx="6" cy="6" r="4.500" fill="#666" stroke=${C} stroke-width="1.800"/>`)}</button>
        <button aria-label="Draw inside">${icon(12, 12, svg`<circle cx="6" cy="6" r="4.500" stroke=${C} stroke-width="1.800"/><path d="M6 6h4v1q-1 3-4 3z" fill=${C}/>`)}</button>
      </div>
      <button class="screen" aria-label="Screen mode">${icon(28, 21, svg`<path d="M1 8h16v12H1z" fill="#777" stroke=${C} stroke-width="1.500"/><path d="M11 1h16v13H11z" fill="#777" stroke=${C} stroke-width="1.500"/><path d="M11 2.500h16M1 9h10" stroke=${C} stroke-width="2.500"/>`)}</button>
    </aside>`;
  }

  private document() {
    const hx = [4, 122.5, 241];
    const hy = [4, 109.5, 214.5];
    return html`<main class="doc">
      <div class="tabs"><div class="doctab"><span>Untitled-1* @ 400% (RGB/GPU Preview)</span><button aria-label="Close document">${icon(9, 9, svg`<path d="M1 1l7 7M8 1L1 8" stroke="#e4e4e4" stroke-width="1.700"/>`)}</button></div></div>
      <div class="stage">
        <div class="canvas"><div class="shape">${icon(245, 220, svg`<path d="M4 4h237v210.500H4z" fill="#c8c8c8" stroke="#5b86dd"/>
          ${hy.map((y, j) => hx.map((x, i) => i === 1 && j === 1 ? svg`<circle cx=${x} cy=${y} r="2.700" fill="#3f74e0"/>` : svg`<rect x=${Math.round(x) - 2.5} y=${Math.round(y) - 2.5} width="5" height="5" fill="#fff" stroke="#5b86dd"/>`))}`)}</div></div>
        <div class="vscroll"><button aria-label="Scroll up">${chevronUp}</button><span class="before"></span><span class="thumb"></span><span class="after"></span><button aria-label="Scroll down">${chevronDown}</button></div>
      </div>
      <div class="status">
        <input class="zoom" aria-label="Zoom" .value=${"400%"} /><button class="drop" aria-label="Zoom levels">${chevronDown}</button>
        <div class="nav"><button aria-label="First artboard">${icon(12, 12, svg`<path d="M1 0h2v12H1zM12 0v12L4 6z" fill="currentColor"/>`)}</button><button aria-label="Previous artboard">${icon(8, 12, svg`<path d="M8 0v12L0 6z" fill="currentColor"/>`)}</button></div>
        <input class="page" aria-label="Artboard" .value=${"1"} /><button class="drop" aria-label="Artboards">${chevronDown}</button>
        <div class="nav"><button aria-label="Next artboard">${icon(8, 12, svg`<path d="M0 0v12l8-6z" fill="currentColor"/>`)}</button><button aria-label="Last artboard">${icon(12, 12, svg`<path d="M9 0h2v12H9zM0 0v12l8-6z" fill="currentColor"/>`)}</button></div>
        <div class="mode">Rectangle</div>
        <button class="play" aria-label="Status menu">${icon(8, 12, svg`<path d="M1 0v12l7-6z" fill="#dedede"/>`)}</button>
        <div class="hscroll"><button aria-label="Scroll left">${chevronLeft}</button><span class="track"><span class="thumb"></span></span><button aria-label="Scroll right">${chevronRight}</button></div>
        <span class="corner"></span>
      </div>
    </main>`;
  }

  private layer(l: Layer) {
    return html`<div class=${classMap({ layer: true, sel: !!l.selected })}>
      <button class="vis" aria-label="Toggle visibility">${eye}</button><span></span>
      <span class="tint" style="background: ${l.color}"></span>
      ${l.group ? html`<button class="fold" aria-label="Expand">${l.open ? chevronDown : chevronRight}</button>` : html`<span></span>`}
      <span class=${classMap({ name: true, child: !l.group })}>${icon(22, 22, svg`<path d="M.5.5h21v21H.5z" fill="#fff" stroke="#111"/>${l.thumb}`)}<span class="label" dir=${l.rtl ? "rtl" : "ltr"}>${l.name}</span></span>
      <span class="end">${icon(15, 15, l.target ? svg`<circle cx="7.500" cy="7.500" r="6.800" stroke="#d0d0d0"/><circle cx="7.500" cy="7.500" r="4.300" stroke="#d0d0d0" stroke-width="1.400"/>` : svg`<circle cx="7.500" cy="7.500" r="4.500" stroke="#c6c6c6" stroke-width="1.300"/>`)}
        ${l.target ? icon(10, 10, svg`<path d="M.5.5h9v9h-9z" fill="#5b86f0" stroke="#1d2a4a"/>`) : l.selected ? icon(8, 8, svg`<path d="M.5.5h7v7h-7z" fill="#5b86f0" stroke="#1d2a4a"/>`) : nothing}</span>
    </div>`;
  }

  private panels() {
    const trash = icon(14, 16, svg`<path d="M0 3.500h14M4.500 3V1h5v2M2 4v11h10V4M5 6v7M7 6v7M9 6v7" stroke="currentColor" stroke-width="1.400"/>`);
    const page = icon(14, 14, svg`<path d="M1 1h13v12H8V7H1z" fill="currentColor"/><path d="M1 8h6v5z" fill="currentColor"/>`);
    return html`<aside class="panels">
      <div class="strip">${collapseRight}</div>
      <div class="ptabs"><button>Properties</button><button class="on">Layers</button><button>Artboards</button><button class="more" aria-label="Panel menu">${panelMenu}</button></div>
      <div class="list">${layers.map((l) => this.layer(l))}</div>
      <div class="pfoot"><span class="count">2 Layers</span>
        <button aria-label="Collect for export">${icon(16, 16, svg`<path d="M8 3H1.500v12H13V9" stroke="currentColor" stroke-width="1.500"/><path d="M7 9l8-8M9.500 1H15v6" stroke="currentColor" stroke-width="1.500"/>`)}</button>
        <button aria-label="Locate object">${icon(16, 16, svg`<circle cx="10" cy="6" r="5" stroke="currentColor" stroke-width="1.500"/><path d="M6.500 9.500L1 15" stroke="currentColor" stroke-width="2"/>`)}</button>
        <button aria-label="Clipping mask">${icon(16, 16, svg`<path d="M5.500 5.500h9v9h-9z" stroke="#888" stroke-width="1.300"/><path d="M1 1h10v10H1z" stroke="currentColor" stroke-width="1.500"/><path d="M4 4h6v6H4z" fill="currentColor"/>`)}</button>
        <button aria-label="New sublayer">${icon(19, 14, svg`<path d="M1 0v5h6M5 2l3 3-3 3" stroke="currentColor" stroke-width="1.500"/><path d="M8 1h10v12h-5V8H8z" fill="currentColor"/><path d="M8 9h4v4z" fill="currentColor"/>`)}</button>
        <button aria-label="New layer">${page}</button><button aria-label="Delete">${trash}</button></div>
      <div class="split"></div>
      <div class="ptabs"><button class="on">Appearance</button><button class="more" aria-label="Panel menu">${panelMenu}</button></div>
      <div class="attrs">
        <div class="attr head">${icon(24, 24, svg`<path d="M.5.5h23v23H.5z" fill="#fff" stroke="#333"/><path d="M3 3h18v18H3z" fill="#c8c8c8"/>`)}<span class="label">Path</span></div>
        <div class="attr"><button class="vis" aria-label="Toggle stroke">${eye}</button><button class="fold" aria-label="Expand">${chevronRight}</button><a class="link" href="#s">Stroke:</a>${icon(22, 22, svg`<path d="M.5.5h21v21H.5z" fill="#eee" stroke="#333"/><path d="M2.500 2.500h17v17h-17z" fill="#fff" stroke="#333"/><path d="M5 17L16 5" stroke="#b3173a" stroke-width="3"/>`)}</div>
        <div class="attr"><button class="vis" aria-label="Toggle fill">${eye}</button><button class="fold" aria-label="Expand">${chevronRight}</button><span>Fill:</span>${icon(22, 22, svg`<path d="M.5.5h21v21H.5z" fill="#eee" stroke="#333"/><path d="M2.500 2.500h17v17h-17z" fill="#fff" stroke="#333"/><path d="M4 4h14v14H4z" fill="#c8c8c8"/>`)}</div>
        <div class="attr"><button class="vis off" aria-label="Toggle opacity">${eye}</button><span></span><a class="link" href="#o">Opacity:</a><span>Default</span></div>
      </div>
      <div class="afoot">
        <button aria-label="New stroke">${icon(15, 15, svg`<path d="M2 2h11v11H2z" stroke="currentColor" stroke-width="3"/>`)}</button>
        <button aria-label="New fill">${icon(15, 15, svg`<path d="M1 1h13v13H1z" stroke="currentColor" stroke-width="1.500"/><path d="M3 3h9v9H3z" fill="currentColor"/>`)}</button>
        <button class="fx" aria-label="Effects"><span>fx</span>${icon(5, 14, svg`<path d="M0 10h5l-2.500 3z" fill="currentColor"/>`)}</button>
        <span class="grow"></span>
        <button aria-label="Clear appearance">${icon(15, 15, svg`<circle cx="7.500" cy="7.500" r="6" stroke="currentColor" stroke-width="2.400"/><path d="M3 3.500l9 8" stroke="currentColor" stroke-width="2.400"/>`)}</button>
        <button class="dim" aria-label="Duplicate">${page}</button><button class="dim" aria-label="Delete item">${trash}</button>
      </div>
    </aside>`;
  }

  private taskbar() {
    return html`<footer class="taskbar">
      <button class="start" aria-label="Start">${icon(18, 18, svg`<path d="M0 2.500L7.500 1.400v7.100H0zM8.500 1.300L18 0v8.500H8.500zM0 9.500h7.500v7.100L0 15.500zM8.500 9.500H18V18l-9.500-1.300z" fill="#fff"/>`)}</button>
      <button class="sys" aria-label="Search">${icon(18, 18, svg`<circle cx="11" cy="7" r="5.800" stroke="#fff" stroke-width="1.400"/><path d="M7 11.500L1 17.500" stroke="#fff" stroke-width="1.400"/>`)}</button>
      <button class="sys" aria-label="Task view">${icon(18, 18, svg`<path d="M1.500 1v3h10V1M1.500 17v-3h10v3M1.500 6.500h10v5h-10zM16 1v16" stroke="#e4e4e4" stroke-width="1.200"/><path d="M15 5h2v3h-2z" fill="#fff"/>`)}</button>
      ${apps.map((a) => html`<button class=${classMap({ task: true, open: !!a.open, active: !!a.active })} aria-label=${a.name}>${icon(28, 28, a.art)}</button>`)}
      <span class="grow"></span>
      ${tray.map(([n, w, art]) => html`<button style="width: ${w}px" aria-label=${n}>${icon(22, 22, svg`<g stroke="#f0f0f0" stroke-width="1.400">${art}</g>`)}</button>`)}
      <button class="lang">ENG</button>
      <button class="clock"><span>12:06</span><span>8/15/2018</span></button>
      <button class="notes" aria-label="Notifications">${icon(18, 18, svg`<path d="M1 1h16v13h-5l-3 3-3-3H1z" stroke="#f0f0f0" stroke-width="1.300"/>`)}</button>
      <button class="desk" aria-label="Show desktop"></button>
    </footer>`;
  }

  render() {
    return html`<div class="app">
      ${this.menubar()} ${this.control()}
      <div class="work">
        ${this.tools()}<span></span>${this.document()}<span></span>
        <aside class="dock"><div class="strip">${collapseLeft}</div>
          ${dockGroups.map((g) => html`<div class="dockset"><div class="grip"></div>${g.map(([n, art]) => html`<button aria-label=${n}>${icon(28, 28, art)}</button>`)}</div>`)}
        </aside>
        ${this.panels()}
      </div>
      ${this.taskbar()}
    </div>`;
  }
}
